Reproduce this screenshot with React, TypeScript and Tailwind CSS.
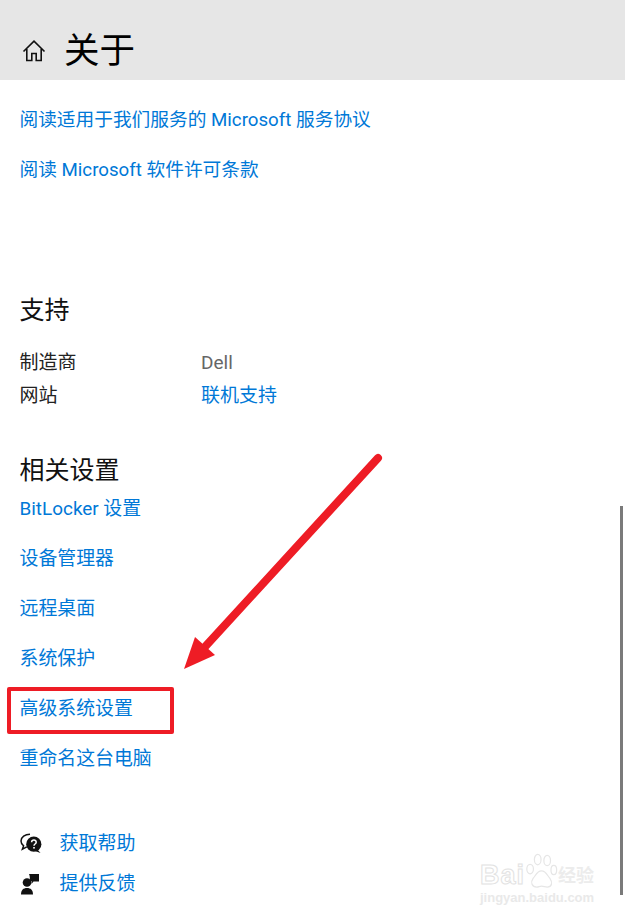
const FONT = "font-['Roboto','Noto_Sans_CJK_SC',sans-serif]";

const RELATED = ["BitLocker 设置", "设备管理器", "远程桌面", "系统保护", "高级系统设置", "重命名这台电脑"];

function HomeIcon() {
  return (
    <svg width="24" height="24" viewBox="0 0 24 24" fill="none" stroke="#111" strokeWidth="1.6" className="shrink-0">
      <path d="M1.5 12.5 12 2.2l10.5 10.3" />
      <path d="M4.8 10v11.5h5v-7h4.4v7h5V10" />
    </svg>
  );
}

function HelpIcon() {
  return (
    <svg width="22" height="22" viewBox="0 0 22 22" className="shrink-0">
      <path d="M10 1.2C5 1.2 1 4.2 1 8c0 2 1 3.600 2.600 4.800L2.400 16.200l4.400-2.300" fill="#fff" stroke="#111" strokeWidth="1.500" />
      <circle cx="13.800" cy="11.200" r="7.600" fill="#111" />
      <path d="M17.500 16.500 20.500 20 15 18z" fill="#111" />
      <path d="M11.600 9.200c.2-3 4.700-2.800 4.600 0 0 1.900-2.200 1.700-2.200 3.500" fill="none" stroke="#fff" strokeWidth="1.500" />
      <rect x="13.200" y="14" width="1.600" height="1.600" fill="#fff" />
    </svg>
  );
}

function FeedbackIcon() {
  return (
    <svg width="20" height="22" viewBox="0 0 20 22" className="shrink-0">
      <circle cx="7" cy="9.500" r="4.300" fill="#111" />
      <path d="M1 21.500c0-4.500 2.400-6.500 6-6.500s6 2 6 6.500z" fill="#111" />
      <path d="M9 1h10v7.500h-5.500L11.500 11V8H9.500c.6-2.500.4-5-.5-7z" fill="#111" />
    </svg>
  );
}

function Watermark() {
  return (
    <div className="absolute left-[480px] top-[846px] w-[118px] text-white font-['Liberation_Sans','Noto_Sans_CJK_SC',sans-serif]">
      <div className="flex items-end h-[44px]">
        <span className="text-[27px] leading-[30px] font-bold tracking-[1px] [-webkit-text-stroke:1px_#e2e2e2]">Bai</span>
        <svg width="33" height="36" viewBox="0 0 34 38" fill="none" stroke="#e6e6e6" strokeWidth="1.300" className="shrink-0 mb-[2px]">
          <ellipse cx="5" cy="18" rx="3.500" ry="5" />
          <ellipse cx="13" cy="8" rx="3.500" ry="5.500" />
          <ellipse cx="23" cy="9" rx="3.500" ry="5.500" />
          <ellipse cx="30" cy="19" rx="3" ry="5" />
          <path d="M17 20c-5 0-6 5-9 8-3 4-1 9 4 9 2 0 3-1 5-1s4 1 6 1c5 0 6-5 3-9-3-3-4-8-9-8z" />
        </svg>
        <span className="text-[18px] leading-[28px] font-bold text-[#ececec]">经验</span>
      </div>
      <div className="text-[13px] leading-[16px] font-bold text-[#e9e9e9]">jingyan.baidu.com</div>
    </div>
  );
}

export default function App() {
  return (
    <div className={`relative w-[625px] h-[915px] overflow-hidden bg-white ${FONT}`}>
      <header className="h-20 bg-[#e6e6e6] flex items-center pl-[22px] pt-[22px]">
        <HomeIcon />
        <h1 className="ml-[18px] text-[35.500px] leading-[40px] text-black">关于</h1>
      </header>

      <div className="pl-[19.500px] text-[18.700px] text-[#0078d7]">
        <div className="pt-[27px] leading-[26px]">阅读适用于我们服务的 Microsoft 服务协议</div>
        <div className="pt-[24px] leading-[26px]">阅读 Microsoft 软件许可条款</div>

        <h2 className="mt-[112px] text-[25px] leading-[32px] text-[#111]">支持</h2>
        <div className="mt-[19px] grid grid-cols-[181.500px_1fr] text-[19px] leading-[33px]">
          <span className="text-[#222]">制造商</span>
          <span className="text-[#666]">Dell</span>
          <span className="text-[#222]">网站</span>
          <span>联机支持</span>
        </div>

        <h2 className="mt-[43px] text-[25px] leading-[32px] text-[#111]">相关设置</h2>
        <div className="mt-[9px] flex flex-col gap-[24px] text-[18.900px]">
          {RELATED.map((label) => (
            <div key={label} className="leading-[26px]">{label}</div>
          ))}
        </div>

        <div className="mt-[56px] flex flex-col gap-[8px] text-[19px]">
          <div className="flex items-center h-[32px]">
            <HelpIcon />
            <span className="ml-[18px]">获取帮助</span>
          </div>
          <div className="flex items-center h-[32px]">
            <FeedbackIcon />
            <span className="ml-[20px]">提供反馈</span>
          </div>
        </div>
      </div>

      <Watermark />

      {/* scrollbar thumb */}
      <div className="absolute left-[620px] top-[506px] w-[3px] h-[389px] bg-[#7a7a7a]" />

      {/* annotations on top of the screenshot */}
      <div className="absolute left-[7px] top-[687px] w-[167px] h-[47px] border-[4px] border-[#ee1c25] rounded-[2px]" />
      <svg width="625" height="915" className="absolute left-0 top-0 pointer-events-none">
        <path d="M378 458 203 649" stroke="#ee1c25" strokeWidth="8" strokeLinecap="round" fill="none" />
        <path d="M184 669 195 637 215 655z" fill="#ee1c25" />
      </svg>
    </div>
  );
}
